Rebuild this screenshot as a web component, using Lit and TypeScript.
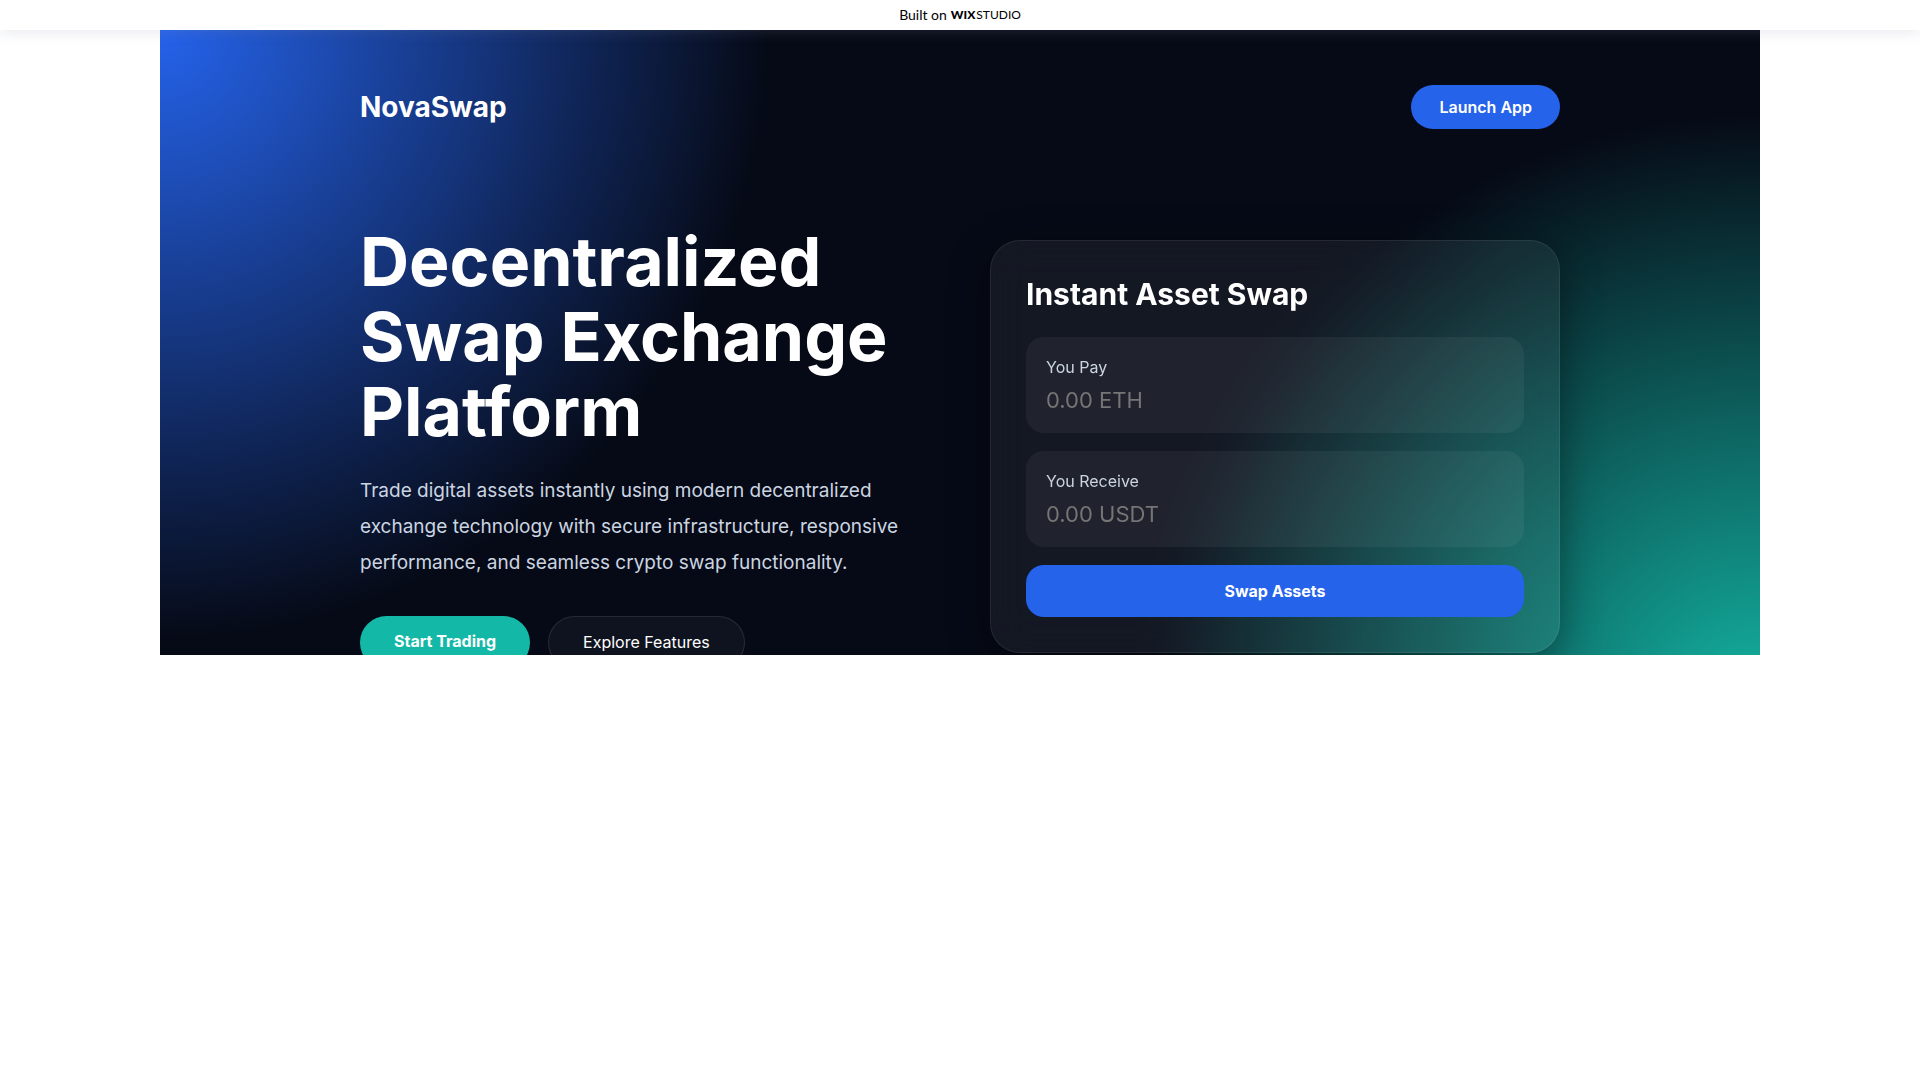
import { LitElement, html, css } from "lit";
import { customElement } from "lit/decorators.js";

@customElement("asset-field")
class AssetField extends LitElement {
  static properties = { label: {}, placeholder: {} };
  declare label: string;
  declare placeholder: string;

  static styles = css`
    :host {
      display: block;
      padding: 21px 20px 19px;
      border-radius: 18px;
      background: rgba(255, 255, 255, 0.05);
    }
    .label {
      display: block;
      margin-bottom: 10px;
      font-size: 16px;
      line-height: 19px;
      color: #cbd5e1;
    }
    .input {
      display: block;
      box-sizing: border-box;
      width: 100%;
      height: 27px;
      padding: 0;
      border: 0;
      outline: 0;
      background: transparent;
      font: inherit;
      font-size: 22px;
      line-height: 27px;
      color: #fff;
    }
    .input::placeholder {
      color: #757575;
    }
  `;

  render() {
    return html`
      <label class="label" for="amount">${this.label}</label>
      <input class="input" id="amount" type="text" placeholder=${this.placeholder} />
    `;
  }
}

@customElement("app-root")
class AppRoot extends LitElement {
  static styles = css`
    :host {
      display: block;
      min-height: 100vh;
      background: #fff;
      font-family: Inter, "Liberation Sans", sans-serif;
    }
    .banner {
      position: relative;
      z-index: 1;
      display: flex;
      align-items: center;
      justify-content: center;
      gap: 4px;
      height: 30px;
      background: #fff;
      box-shadow: 0 0 16px rgba(131, 138, 160, 0.24);
      font-family: Lato, sans-serif;
      font-size: 14px;
      line-height: 16px;
      color: #000;
      text-decoration: none;
    }
    .brand {
      display: flex;
      align-items: center;
      gap: 1px;
      font-size: 12px;
    }
    .wix {
      font-weight: 900;
    }
    .studio {
      font-weight: 400;
    }
    .frame {
      max-width: 1600px;
      height: 625px;
      margin: 0 auto;
      overflow: hidden;
    }
    .page {
      padding: 55px 40px;
      background:
        radial-gradient(circle at top left, #2563eb, transparent 35%),
        radial-gradient(circle at bottom right, #14b8a6, transparent 35%),
        #060a16;
      color: #fff;
    }
    .content {
      max-width: 1200px;
      margin: 0 auto;
    }
    .nav {
      display: flex;
      align-items: center;
      justify-content: space-between;
      margin-bottom: 95px;
    }
    .logo {
      font-size: 28px;
      line-height: 34px;
      font-weight: 700;
    }
    .button {
      box-sizing: border-box;
      border: 0;
      font: inherit;
      font-size: 16px;
      line-height: 20px;
      color: #fff;
      text-decoration: none;
      cursor: pointer;
    }
    .launch {
      padding: 12px 28px;
      border-radius: 40px;
      background: #2563eb;
      font-weight: 600;
    }
    .hero {
      display: grid;
      grid-template-columns: repeat(auto-fit, minmax(320px, 1fr));
      gap: 60px;
      align-items: center;
    }
    .title {
      margin: 0 0 24px;
      font-size: 68px;
      line-height: 75px;
      font-weight: 700;
    }
    .lead {
      margin: 0 0 35px;
      font-size: 19px;
      line-height: 36px;
      color: #cbd5e1;
    }
    .actions {
      display: flex;
      flex-wrap: wrap;
      gap: 18px;
    }
    .action {
      padding: 16px 34px;
      border-radius: 40px;
      line-height: 19px;
    }
    .start {
      background: #14b8a6;
      font-weight: 700;
    }
    .explore {
      border: 1px solid rgba(255, 255, 255, 0.1);
      background: rgba(255, 255, 255, 0.04);
    }
    .card {
      display: flex;
      flex-direction: column;
      gap: 18px;
      padding: 35px;
      border: 1px solid rgba(255, 255, 255, 0.08);
      border-radius: 30px;
      background: rgba(255, 255, 255, 0.06);
      backdrop-filter: blur(20px);
      box-shadow: 0 10px 40px rgba(0, 0, 0, 0.4);
    }
    .card-title {
      margin: 0 0 7px;
      font-size: 30px;
      line-height: 36px;
      font-weight: 700;
    }
    .swap {
      padding: 16px;
      border-radius: 18px;
      background: #2563eb;
      font-weight: 700;
    }
  `;

  render() {
    return html`
      <a class="banner" href="#studio">
        <span>Built on</span>
        <span class="brand"><span class="wix">WIX</span><span class="studio">STUDIO</span></span>
      </a>
      <main class="frame">
        <div class="page">
          <div class="content">
            <header class="nav">
              <div class="logo">NovaSwap</div>
              <button class="button launch" type="button">Launch App</button>
            </header>
            <section class="hero">
              <div>
                <h1 class="title">Decentralized Swap Exchange Platform</h1>
                <p class="lead">
                  Trade digital assets instantly using modern decentralized exchange technology with
                  secure infrastructure, responsive performance, and seamless crypto swap
                  functionality.
                </p>
                <div class="actions">
                  <a class="button action start" href="#trade">Start Trading</a>
                  <a class="button action explore" href="#features">Explore Features</a>
                </div>
              </div>
              <form class="card">
                <h2 class="card-title">Instant Asset Swap</h2>
                <asset-field label="You Pay" placeholder="0.00 ETH"></asset-field>
                <asset-field label="You Receive" placeholder="0.00 USDT"></asset-field>
                <button class="button swap" type="button">Swap Assets</button>
              </form>
            </section>
          </div>
        </div>
      </main>
    `;
  }
}
